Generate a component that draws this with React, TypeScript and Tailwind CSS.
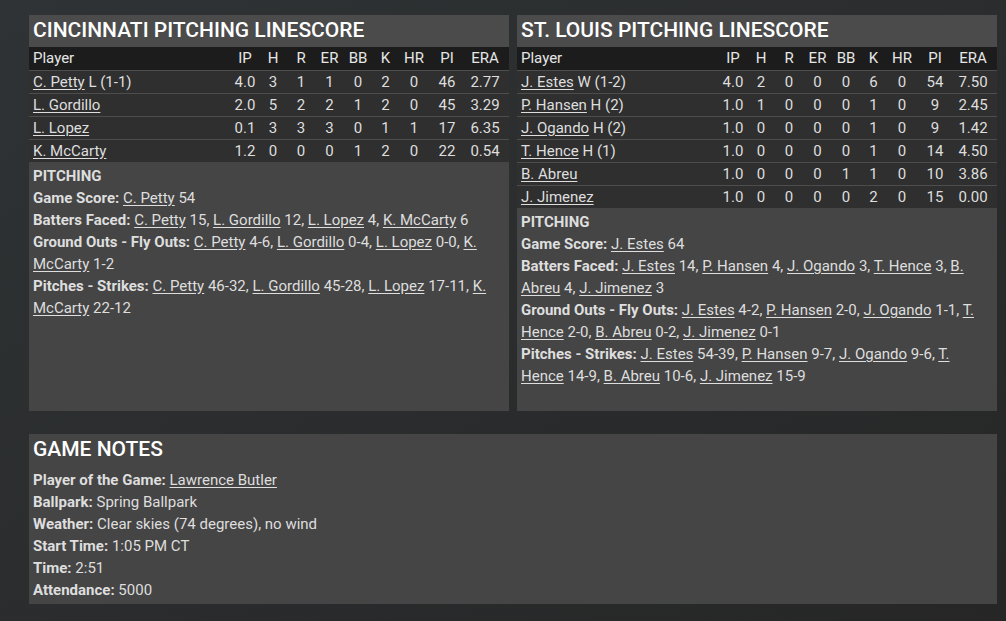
import type { ReactNode } from 'react'

type Line = { name: string; note?: string; s: (string | number)[] }

const cols = [
  { k: 'IP', w: 'w-[28px]' },
  { k: 'H', w: 'w-[28px]' },
  { k: 'R', w: 'w-[28px]' },
  { k: 'ER', w: 'w-[29px]' },
  { k: 'BB', w: 'w-[28px]' },
  { k: 'K', w: 'w-[27px]' },
  { k: 'HR', w: 'w-[30px]' },
  { k: 'PI', w: 'w-[36px]' },
  { k: 'ERA', w: 'w-[44px] pr-1' },
]

const cin: Line[] = [
  { name: 'C. Petty', note: 'L (1-1)', s: ['4.0', 3, 1, 1, 0, 2, 0, 46, '2.77'] },
  { name: 'L. Gordillo', s: ['2.0', 5, 2, 2, 1, 2, 0, 45, '3.29'] },
  { name: 'L. Lopez', s: ['0.1', 3, 3, 3, 0, 1, 1, 17, '6.35'] },
  { name: 'K. McCarty', s: ['1.2', 0, 0, 0, 1, 2, 0, 22, '0.54'] },
]

const stl: Line[] = [
  { name: 'J. Estes', note: 'W (1-2)', s: ['4.0', 2, 0, 0, 0, 6, 0, 54, '7.50'] },
  { name: 'P. Hansen', note: 'H (2)', s: ['1.0', 1, 0, 0, 0, 1, 0, 9, '2.45'] },
  { name: 'J. Ogando', note: 'H (2)', s: ['1.0', 0, 0, 0, 0, 1, 0, 9, '1.42'] },
  { name: 'T. Hence', note: 'H (1)', s: ['1.0', 0, 0, 0, 0, 1, 0, 14, '4.50'] },
  { name: 'B. Abreu', s: ['1.0', 0, 0, 0, 1, 1, 0, 10, '3.86'] },
  { name: 'J. Jimenez', s: ['1.0', 0, 0, 0, 0, 2, 0, 15, '0.00'] },
]

// "name value" pairs, joined with commas
type Pair = [string, string]

const cinNotes: { label: string; items: Pair[] }[] = [
  { label: 'Game Score:', items: [['C. Petty', '54']] },
  { label: 'Batters Faced:', items: [['C. Petty', '15'], ['L. Gordillo', '12'], ['L. Lopez', '4'], ['K. McCarty', '6']] },
  { label: 'Ground Outs - Fly Outs:', items: [['C. Petty', '4-6'], ['L. Gordillo', '0-4'], ['L. Lopez', '0-0'], ['K. McCarty', '1-2']] },
  { label: 'Pitches - Strikes:', items: [['C. Petty', '46-32'], ['L. Gordillo', '45-28'], ['L. Lopez', '17-11'], ['K. McCarty', '22-12']] },
]

const stlNotes: { label: string; items: Pair[] }[] = [
  { label: 'Game Score:', items: [['J. Estes', '64']] },
  { label: 'Batters Faced:', items: [['J. Estes', '14'], ['P. Hansen', '4'], ['J. Ogando', '3'], ['T. Hence', '3'], ['B. Abreu', '4'], ['J. Jimenez', '3']] },
  { label: 'Ground Outs - Fly Outs:', items: [['J. Estes', '4-2'], ['P. Hansen', '2-0'], ['J. Ogando', '1-1'], ['T. Hence', '2-0'], ['B. Abreu', '0-2'], ['J. Jimenez', '0-1']] },
  { label: 'Pitches - Strikes:', items: [['J. Estes', '54-39'], ['P. Hansen', '9-7'], ['J. Ogando', '9-6'], ['T. Hence', '14-9'], ['B. Abreu', '10-6'], ['J. Jimenez', '15-9']] },
]

function A({ children }: { children: ReactNode }) {
  return <a className="cursor-pointer underline underline-offset-2">{children}</a>
}

function Linescore({ title, lines, notes }: { title: string; lines: Line[]; notes: typeof cinNotes }) {
  return (
    <div className="flex h-[396px] flex-col bg-[#454545]">
      <div className="flex h-8 items-center bg-[#4b4b4b] px-1 text-[21px] font-medium text-white">{title}</div>
      <table className="w-full table-fixed border-collapse text-[15px] leading-[22px]">
        <thead>
          <tr className="h-[23px] bg-[#1c1c1c] text-[#e6e6e6]">
            <th className="w-[202px] pl-1 text-left font-normal">Player</th>
            {cols.map((c) => (
              <th key={c.k} className={`${c.w} text-center font-normal`}>
                {c.k}
              </th>
            ))}
          </tr>
        </thead>
        <tbody>
          {lines.map((l) => (
            <tr key={l.name} className="h-[23px] border-t border-[#4d4d4d] bg-[#2f2f2f] text-[#dedede]">
              <td className="pl-1 text-left">
                <A>{l.name}</A>
                {l.note && ` ${l.note}`}
              </td>
              {l.s.map((v, i) => (
                <td key={i} className={`text-center ${i === 8 ? 'pr-1' : ''}`}>
                  {v}
                </td>
              ))}
            </tr>
          ))}
        </tbody>
      </table>
      <div className="px-1 pt-[3px] text-[15px] leading-[22px] text-[#dedede]">
        <div className="font-bold">PITCHING</div>
        {notes.map((n) => (
          <div key={n.label}>
            <span className="font-bold">{n.label}</span>{' '}
            {n.items.map(([p, v], i) => (
              <span key={p}>
                <A>{p}</A> {v}
                {i < n.items.length - 1 ? ', ' : ''}
              </span>
            ))}
          </div>
        ))}
      </div>
    </div>
  )
}

export default function App() {
  return (
    <div
      className="h-[621px] w-[1006px] bg-gradient-to-br from-[#2f3335] to-[#262626] pl-[29px] pt-[15px]"
      style={{ fontFamily: 'Roboto, "Noto Sans", sans-serif' }}
    >
      <div className="grid w-[968px] grid-cols-2 gap-2">
        <Linescore title="CINCINNATI PITCHING LINESCORE" lines={cin} notes={cinNotes} />
        <Linescore title="ST. LOUIS PITCHING LINESCORE" lines={stl} notes={stlNotes} />
      </div>

      <div className="mt-[23px] h-[170px] w-[968px] bg-[#454545] px-1">
        <div className="flex h-8 items-center text-[21px] font-medium text-white">GAME NOTES</div>
        <div className="pt-[3px] text-[15px] leading-[22px] text-[#dedede]">
          <div>
            <span className="font-bold">Player of the Game:</span> <A>Lawrence Butler</A>
          </div>
          <div>
            <span className="font-bold">Ballpark:</span> Spring Ballpark
          </div>
          <div>
            <span className="font-bold">Weather:</span> Clear skies (74 degrees), no wind
          </div>
          <div>
            <span className="font-bold">Start Time:</span> 1:05 PM CT
          </div>
          <div>
            <span className="font-bold">Time:</span> 2:51
          </div>
          <div>
            <span className="font-bold">Attendance:</span> 5000
          </div>
        </div>
      </div>
    </div>
  )
}
